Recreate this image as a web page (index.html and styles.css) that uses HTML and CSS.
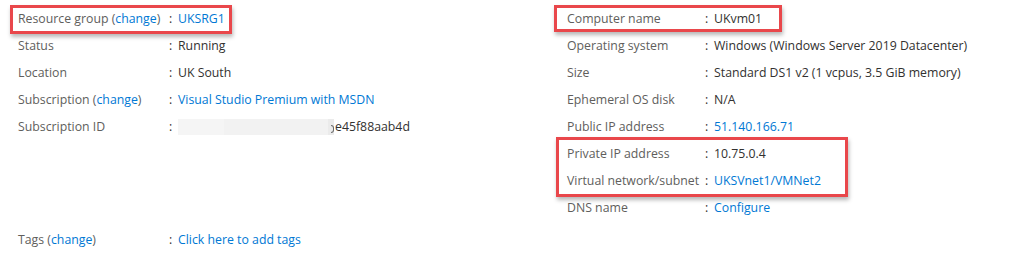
FILE: index.html
```html
<!DOCTYPE html>
<html lang="en">
<head>
  <meta charset="UTF-8" />
  <meta name="viewport" content="width=device-width, initial-scale=1.0" />
  <title>UKvm01 - Essentials</title>
  <link rel="stylesheet" href="styles.css">
</head>
<body>
  <main class="essentials">
    <div class="cols">
      <dl class="col col-left">
        <div class="hl hl-rg">
          <div class="row"><dt>Resource group (<a href="#">change</a>)</dt><dd class="sep">:</dd><dd><a href="#">UKSRG1</a></dd></div>
        </div>
        <div class="row"><dt>Status</dt><dd class="sep">:</dd><dd>Running</dd></div>
        <div class="row"><dt>Location</dt><dd class="sep">:</dd><dd>UK South</dd></div>
        <div class="row"><dt>Subscription (<a href="#">change</a>)</dt><dd class="sep">:</dd><dd><a href="#">Visual Studio Premium with MSDN</a></dd></div>
        <div class="row"><dt>Subscription ID</dt><dd class="sep">:</dd><dd><span class="redact"></span><span class="redact-edge"></span>e45f88aab4d</dd></div>
      </dl>

      <dl class="col col-right">
        <div class="hl hl-name">
          <div class="row"><dt>Computer name</dt><dd class="sep">:</dd><dd>UKvm01</dd></div>
        </div>
        <div class="row"><dt>Operating system</dt><dd class="sep">:</dd><dd>Windows (Windows Server 2019 Datacenter)</dd></div>
        <div class="row"><dt>Size</dt><dd class="sep">:</dd><dd>Standard DS1 v2 (1 vcpus, 3.5 GiB memory)</dd></div>
        <div class="row"><dt>Ephemeral OS disk</dt><dd class="sep">:</dd><dd>N/A</dd></div>
        <div class="row"><dt>Public IP address</dt><dd class="sep">:</dd><dd><a href="#">51.140.166.71</a></dd></div>
        <div class="hl hl-net">
          <div class="row"><dt>Private IP address</dt><dd class="sep">:</dd><dd>10.75.0.4</dd></div>
          <div class="row"><dt>Virtual network/subnet</dt><dd class="sep">:</dd><dd><a href="#">UKSVnet1/VMNet2</a></dd></div>
        </div>
        <div class="row"><dt>DNS name</dt><dd class="sep">:</dd><dd><a href="#">Configure</a></dd></div>
      </dl>
    </div>

    <dl class="col col-left tags">
      <div class="row"><dt>Tags (<a href="#">change</a>)</dt><dd class="sep">:</dd><dd><a href="#">Click here to add tags</a></dd></div>
    </dl>
  </main>
</body>
</html>
```

FILE: styles.css
```css
body {
  margin: 0;
  font-family: 'Open Sans', 'Noto Sans', sans-serif;
  font-size: 12.3px;
  background: #ffffff;
  color: #323130;
}
.essentials {
  padding: 5px 0 0 18px;
}
.cols {
  display: grid;
  grid-template-columns: 549px auto;
}
dl, dd {
  margin: 0;
}
.row {
  display: grid;
  grid-template-columns: var(--label) 10px auto;
  height: 27px;
  line-height: 27px;
  white-space: nowrap;
}
.col-left {
  --label: 150px;
}
.col-right {
  --label: 137px;
}
dt {
  color: #605e5c;
}
a {
  color: #0078d4;
  text-decoration: none;
}
.sep {
  color: #323130;
  padding-left: 1px;
}
.redact {
  display: inline-block;
  width: 150px;
  height: 16px;
  vertical-align: -4px;
  background: linear-gradient(to right, #f5f5f5 0, #f5f5f5 46px, #f2f2f2 46px);
}
.redact-edge {
  display: inline-block;
  box-sizing: border-box;
  width: 6px;
  height: 16px;
  margin-right: 1px;
  vertical-align: -4px;
  background: #ebebeb;
  position: relative;
}
.redact-edge::after {
  content: "";
  position: absolute;
  right: 0;
  top: 6px;
  width: 2px;
  height: 6px;
  border: 1px solid #6b6b6b;
  border-left: none;
  border-radius: 0 4px 4px 0;
}
.hl {
  box-sizing: border-box;
  box-shadow: inset 0 0 0 3px #e9474b, 1px 3px 4px rgba(0, 0, 0, 0.28);
}
.hl-rg {
  width: 222px;
  margin: 0 0 -1.5px -8px;
  padding: 0 0 1.5px 8px;
}
.hl-name {
  width: 228px;
  margin: 0 0 0 -13px;
  padding-left: 13px;
}
.hl-net {
  width: 292px;
  margin: -3.5px 0 -2.5px -11px;
  padding: 3.5px 0 2.5px 11px;
}
.tags {
  margin-top: 5px;
}
```
